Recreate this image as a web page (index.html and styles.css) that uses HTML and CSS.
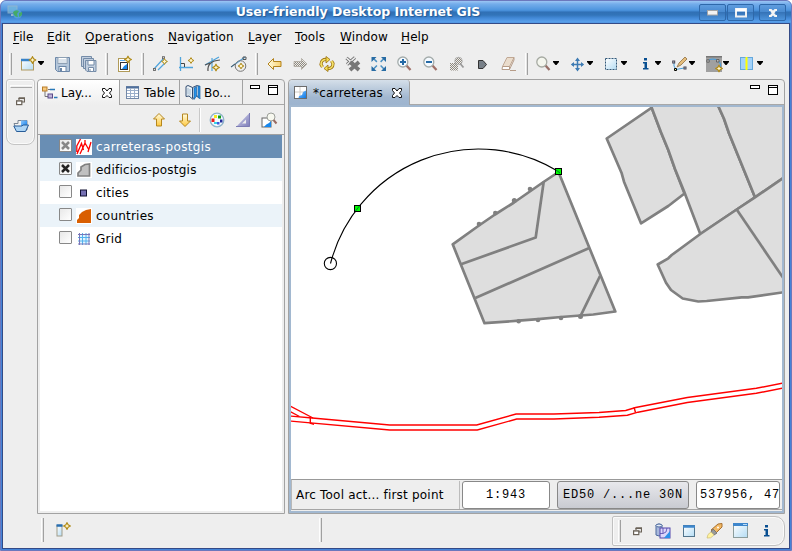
FILE: index.html
```html
<!DOCTYPE html>
<html lang="en">
<head>
<meta charset="utf-8">
<title>User-friendly Desktop Internet GIS</title>
<link rel="stylesheet" href="styles.css">
</head>
<body>
<svg class="defs" width="0" height="0" aria-hidden="true">
  <defs>
    <linearGradient id="gold" x1="0" y1="0" x2="0" y2="1"><stop offset="0" stop-color="#fffbe0"/><stop offset="1" stop-color="#ffc83c"/></linearGradient>
    <linearGradient id="goldh" x1="0" y1="0" x2="1" y2="0"><stop offset="0" stop-color="#fffbe0"/><stop offset="1" stop-color="#f8d070"/></linearGradient>
    <linearGradient id="sky" x1="0" y1="0" x2="1" y2="1"><stop offset="0" stop-color="#ffffff"/><stop offset="1" stop-color="#b4dcf4"/></linearGradient>
    <linearGradient id="blue" x1="0" y1="0" x2="1" y2="1"><stop offset="0" stop-color="#8cc8ff"/><stop offset="1" stop-color="#0a78e6"/></linearGradient>
    <linearGradient id="violet" x1="0" y1="0" x2="1" y2="1"><stop offset="0" stop-color="#d8d8f0"/><stop offset="1" stop-color="#7c7cb8"/></linearGradient>
    <pattern id="dots" width="2" height="2" patternUnits="userSpaceOnUse"><rect width="2" height="2" fill="#eeece8"/><rect width="1" height="1" fill="#8c8880"/><rect x="1" y="1" width="1" height="1" fill="#8c8880"/></pattern>
    <symbol id="spark" viewBox="0 0 7 7"><path d="M3.5 .6 4.5 2.5 6.4 3.5 4.5 4.5 3.5 6.4 2.5 4.5 .6 3.5 2.5 2.5Z" fill="#fff6cc" stroke="#b08a18" stroke-width="1"/></symbol>
    <symbol id="close" viewBox="0 0 12 12"><path d="M1.5 1.5H4L6 4 8 1.5H10.5V3.5L8.5 6 10.5 8.5V10.5H8L6 8.5 4 10.5H1.5V8.5L3.5 6 1.5 3.5Z" fill="#fff" stroke="#111"/></symbol>
    <symbol id="restore" viewBox="0 0 9 9"><path d="M3 1H8.5V5H6M3 1V3" fill="none" stroke="#6a6258" stroke-width="1.2"/><path d="M2.5 1.2H9M0 4.2H6.4" stroke="#6a6258" stroke-width="1.6"/><rect x=".6" y="4" width="5.2" height="3.6" fill="#fff" stroke="#6a6258" stroke-width="1.2"/></symbol>
    <symbol id="min" viewBox="0 0 10 4"><rect x=".5" y=".5" width="9" height="3" fill="#fff" stroke="#000"/></symbol>
    <symbol id="max" viewBox="0 0 10 10"><rect x=".5" y=".5" width="9" height="9" fill="#fff" stroke="#000"/><path d="M0 2.5H10" stroke="#000"/></symbol>
    <symbol id="drop" viewBox="0 0 6 4"><path d="M0 0H6V1L3.5 4H2.5L0 1Z"/></symbol>
    <symbol id="map" viewBox="0 0 14 14"><rect x=".5" y=".5" width="12" height="12" fill="#fff" stroke="#6c6c6c"/><path d="M6 1V12M1 6H12" stroke="#d0ccc6"/><path d="M12 4.500V12H4.500L5 10 8 9 9 6Z" fill="url(#blue)"/></symbol>
  </defs>
</svg>
<div class="window">
  <header class="titlebar">
    <svg class="app-icon" width="16" height="15" viewBox="0 0 16 15"><rect x="1" y="1" width="9" height="7" fill="#75b9dd" stroke="#9dbac9"/><path d="M4 10H8" stroke="#b8c8d0" stroke-width="2"/><circle cx="10.500" cy="9" r="4.500" fill="#5aa8dc"/><path d="M6 7Q9 4 12 6L10 9 11 12Q7 12 6 7M12 8 15 7Q16 11 12 12Z" fill="#4bbd4d"/></svg>
    <h1>User-friendly Desktop Internet GIS</h1>
    <div class="winbtns">
      <span class="winbtn"><svg width="12" height="6" viewBox="0 0 12 6"><rect x=".5" y=".5" width="10" height="4.500" fill="#f2f2f2" stroke="#a5a5a5"/></svg></span>
      <span class="winbtn"><svg width="12" height="10" viewBox="0 0 12 10"><path d="M1 1H11V8.500H1Z" fill="none" stroke="#eef0f2" stroke-width="2"/><path d="M1 2H11" stroke="#fff" stroke-width="3"/></svg></span>
      <span class="winbtn winbtn-close"><svg width="10" height="8" viewBox="0 0 10 8"><path d="M1 1H3L5 3 7 1H9M1 7H3L5 5 7 7H9M3 2 7 6M7 2 3 6" fill="none" stroke="#f4f4f4" stroke-width="2"/></svg></span>
    </div>
  </header>
  <div class="shell">
    <nav class="menubar">
      <span><u>F</u>ile</span><span><u>E</u>dit</span><span><u>O</u>perations</span><span><u>N</u>avigation</span><span><u>L</u>ayer</span><span><u>T</u>ools</span><span><u>W</u>indow</span><span><u>H</u>elp</span>
    </nav>
    <div class="toolbar">
      <i class="grip"></i>
      <span class="tool tool-drop"><svg class="ic" viewBox="0 0 16 16"><rect x=".5" y="3.500" width="12" height="10.500" fill="url(#sky)" stroke="#b09a60"/><path d="M0 4H9" stroke="#3882c8" stroke-width="2.400"/><use href="#spark" x="7.500" y="0" width="8" height="8"/></svg><svg class="arrow"><use href="#drop"/></svg></span>
      <span class="tool"><svg class="ic" viewBox="0 0 16 16"><path d="M.5 1.500H14.500V15.500H2.500L.5 13.500Z" fill="#b4c6da" stroke="#6c87a8"/><rect x="3" y="1.500" width="9" height="6" fill="#fff" stroke="#8ea0b4"/><path d="M4 4H11M4 6H11" stroke="#b8c8d8"/><rect x="4" y="10.500" width="7" height="5" fill="#fff" stroke="#6c87a8"/><rect x="5" y="12" width="2" height="3" fill="#6c87a8"/></svg></span>
      <span class="tool"><svg class="ic" viewBox="0 0 16 16"><g fill="#c2cfdf" stroke="#758ca8"><path d="M.5 .5H10.500V10.500H.5Z"/><path d="M2.500 2.500H12.500V12.500H2.500Z"/><path d="M4.500 4.500H15V15.500H6L4.500 14Z"/><path d="M7 4.500H13V9H7Z" fill="#fff"/><path d="M7.500 11.500H12.500V15.500H7.500Z" fill="#fff"/></g><path d="M9 13V15" stroke="#758ca8"/></svg></span>
      <i class="grip"></i>
      <span class="tool"><svg class="ic" viewBox="0 0 16 16"><rect x="1.500" y="2.500" width="11" height="13" fill="#fff" stroke="#b09a58"/><rect x="3.500" y="6.500" width="7" height="7" fill="#fff" stroke="#333"/><path d="M10 8V13H5Q6 10 10 8" fill="#1686ea"/><path d="M3 4.500H8" stroke="#58a8ec"/><use href="#spark" x="7" y="-.5" width="8" height="8"/></svg></span>
      <i class="grip"></i>
      <span class="tool"><svg class="ic" viewBox="0 0 16 16"><path d="M1 13 11 2M5 14 14 5" fill="none" stroke="#4fa4dc" stroke-width="1.200"/><g fill="#ddd" stroke="#666" stroke-width=".9"><rect x=".5" y="12.500" width="2" height="2"/><rect x="9.500" y=".7" width="2" height="2"/></g><use href="#spark" x="8" y="2" width="7" height="7"/></svg></span>
      <span class="tool"><svg class="ic" viewBox="0 0 16 16"><path d="M1.500 1V15M0 11.500H14" stroke="#4fa4dc" stroke-width="1.300"/><path d="M2 7.500H5.500V11" fill="none" stroke="#444"/><use href="#spark" x="8.500" y="1" width="7" height="7"/></svg></span>
      <span class="tool"><svg class="ic" viewBox="0 0 16 16"><path d="M0 9 14 1M7 2V15" stroke="#4fa4dc" stroke-width="1.200"/><path d="M3 15Q2 5 15 4M0 9 5 7" fill="none" stroke="#555" stroke-width="1.200"/><use href="#spark" x="7" y="7.500" width="8" height="8"/></svg></span>
      <span class="tool"><svg class="ic" viewBox="0 0 16 16"><path d="M0 11 14 1" stroke="#4fa4dc" stroke-width="1.200"/><circle cx="9.500" cy="10" r="5.300" fill="none" stroke="#777"/><path d="M0 11 4 8M12 1H15V3.500H12Z" fill="none" stroke="#555"/><use href="#spark" x="6.500" y="6.500" width="7" height="7"/></svg></span>
      <i class="grip"></i>
      <span class="tool"><svg class="ic" viewBox="0 0 16 16"><path d="M1 8 6.500 2.500V5.500H14V10.500H6.500V13.500Z" fill="url(#goldh)" stroke="#b3821d"/></svg></span>
      <span class="tool"><svg class="ic" viewBox="0 0 16 16"><path d="M14 8 8.500 2.500V5.500H1V10.500H8.500V13.500Z" fill="url(#dots)" stroke="#a8a298" stroke-width=".7"/></svg></span>
      <span class="tool"><svg class="ic" viewBox="0 0 16 16"><g fill="none" stroke="#a07510" stroke-width="3.200"><path d="M8 3.500Q2 3 2 8.500L3.500 11M8 12.500Q14 13 14 7.500L12.500 5"/></g><g fill="none" stroke="#f6e46c" stroke-width="1.600"><path d="M8 3.500Q2 3 2 8.500L3.500 11M8 12.500Q14 13 14 7.500L12.500 5"/></g><path d="M7 .5 11 3.500 7 7ZM9 9 5 12.500 9 15.500Z" fill="#f6dc50" stroke="#987010" stroke-width=".8"/></svg></span>
      <span class="tool"><svg class="ic" viewBox="0 0 16 16"><path d="M1.500 2 9 8.500M10 1.500 2 8.500" stroke="#777" stroke-width="3.200"/><path d="M1.500 2 9 8.500M10 1.500 2 8.500" stroke="#f2f2f2" stroke-width="1.500"/><path d="M5 6 14 14M14 6 5 14" stroke="#777" stroke-width="3.800"/></svg></span>
      <span class="tool"><svg class="ic" viewBox="0 0 16 16"><path d="M2.500 2.500 13 13M13 2.500 2.500 13" stroke="#4c91c3" stroke-width="1.500" stroke-dasharray="4.800 5.200"/><path d="M.5 1H5.500L.5 6ZM15 1H10L15 6ZM.5 15H5.500L.5 10ZM15 15H10L15 10Z" fill="#286ca4"/></svg></span>
      <span class="tool"><svg class="ic" viewBox="0 0 16 16"><path d="M9 9 13.500 14" stroke="#a07068" stroke-width="2.300"/><circle cx="5.800" cy="6" r="5" fill="#f5faff" stroke="#a4acab" stroke-width="1.300"/><path d="M3 6H9M6 3V9" stroke="#2469a5" stroke-width="2"/></svg></span>
      <span class="tool"><svg class="ic" viewBox="0 0 16 16"><path d="M9 9 13.500 14" stroke="#a07068" stroke-width="2.300"/><circle cx="5.800" cy="6" r="5" fill="#f5faff" stroke="#a4acab" stroke-width="1.300"/><path d="M3 6H9" stroke="#2469a5" stroke-width="2"/></svg></span>
      <span class="tool"><svg class="ic" viewBox="0 0 16 16"><rect x="1" y="7" width="8" height="7.500" fill="url(#dots)"/><circle cx="9.500" cy="5" r="3.800" fill="url(#dots)" stroke="#aaa" stroke-width=".7"/><path d="M11.500 8 14.500 11.500" stroke="#999" stroke-width="1.800"/></svg></span>
      <span class="tool"><svg class="ic" viewBox="0 0 16 16"><path d="M3.500 4.500H8L11.500 8.500 8 12.500H3.500Z" fill="#788088" stroke="#333"/></svg></span>
      <span class="tool"><svg class="ic" viewBox="0 0 16 16"><path d="M6 1.500H13L8.500 10.500H1.500Z" fill="#eadccc" stroke="#c0a894"/><path d="M1.500 10.500H8.500V13.500H1Z" fill="#fff" stroke="#b69c88"/><path d="M8.500 13.500 13 4V1.500M9 14.500H15" fill="none" stroke="#b69c88"/></svg></span>
      <i class="grip grip-last"></i>
      <span class="tool tool-drop"><svg class="ic" viewBox="0 0 16 16"><path d="M9.500 9.500 13.500 14" stroke="#987068" stroke-width="2.300"/><circle cx="5.800" cy="6" r="5" fill="#f4f6ee" stroke="#a6aaa2" stroke-width="1.300"/></svg><svg class="arrow"><use href="#drop"/></svg></span>
      <span class="tool tool-drop"><svg class="ic" viewBox="0 0 16 16"><path d="M7.500 3V14M2 8.500H13" stroke="#3f7cb4" stroke-width="1.500"/><path d="M7.500 1.500 10 5H5ZM7.500 15.500 10 12H5ZM.8 8.500 4 6V11ZM14.200 8.500 11 6V11Z" fill="#3f7cb4"/></svg><svg class="arrow"><use href="#drop"/></svg></span>
      <span class="tool tool-drop"><svg class="ic" viewBox="0 0 16 16"><rect x="1.500" y="2.500" width="11" height="11" fill="url(#sky)" stroke="#335878" stroke-dasharray="2 1"/></svg><svg class="arrow"><use href="#drop"/></svg></span>
      <span class="tool tool-drop"><svg class="ic" viewBox="0 0 16 16"><path d="M6 2H9V4.500H6ZM5 6H9V12H10.500V13.500H5V12H6.500V7.500H5Z" fill="#084f91"/></svg><svg class="arrow"><use href="#drop"/></svg></span>
      <span class="tool tool-drop"><svg class="ic" viewBox="0 0 16 16"><path d="M2 7V10L4 13.500 12 12" fill="none" stroke="#48a0dc"/><path d="M5 11 7 7 13 1 15 3 9 9Z" fill="#e5bd7c" stroke="#8f6e40" stroke-width=".8"/><g fill="#ddd" stroke="#445"><rect x=".7" y="5" width="2" height="2"/><rect x="12" y="11" width="2" height="2"/></g><path d="M2.500 12.500H4.500V14.500H2.500Z" fill="#ff9" stroke="#000"/></svg><svg class="arrow"><use href="#drop"/></svg></span>
      <span class="tool tool-drop"><svg class="ic" viewBox="0 0 16 16"><path d="M0 0H16V16H0Z" fill="#a0a0a0"/><path d="M0 .8H16" stroke="#777" stroke-width="1.500"/><path d="M2 5Q3 3 7 3T12 5Q15 6 14.500 12" fill="none" stroke="#3d9ee5"/><path d="M.8 3.800H3.200V6.200H.8ZM10.500 3.500H13V6H10.500Z" fill="#bbb" stroke="#555" stroke-width=".8"/><use href="#spark" x="9" y="8.500" width="8" height="8"/></svg><svg class="arrow"><use href="#drop"/></svg></span>
      <span class="tool tool-drop"><svg class="ic" viewBox="0 0 16 16"><rect x=".5" y="1.500" width="12" height="12" fill="#a2d2fa" stroke="#65a8dc"/><path d="M6.500 1V14" stroke="#ff0" stroke-width="2"/></svg><svg class="arrow"><use href="#drop"/></svg></span>
    </div>
    <main class="workbench">
      <aside class="fastbar">
        <i class="handle"></i>
        <svg width="9" height="9"><use href="#restore"/></svg>
        <svg width="16" height="14" viewBox="0 0 16 14"><path d="M1 4.500H5V1.500H14V11H3.500Z" fill="#f2f2f0" stroke="#7a8594"/><path d="M8 1.500H14V9L8 8Z" fill="url(#blue)"/><path d="M.8 7H9L10 6H15.500L12.500 12.500H3.500Z" fill="#aed5f5" stroke="#285c98"/></svg>
      </aside>
      <section class="view">
        <div class="tabs">
          <div class="tab tab-active"><svg width="16" height="14" viewBox="0 0 16 14"><path d="M3 5V10.500H7M6 3.500H10" fill="none" stroke="#777"/><rect x=".5" y="1" width="4.500" height="4" fill="#f5c87c" stroke="#b97d28"/><rect x="6" y="8" width="4.500" height="4" fill="#c0b4da" stroke="#594a88"/><path d="M8 3.500H13M12 11.500H15.500" stroke="#2878b8" stroke-width="1.300"/></svg><b>Lay...</b><svg class="x" width="12" height="12"><use href="#close"/></svg></div>
          <div class="tab tab-table"><svg width="13" height="13" viewBox="0 0 13 13"><rect x=".5" y=".5" width="12" height="12" fill="#fff" stroke="#7388a8"/><path d="M0 1.500H13" stroke="#50709c" stroke-width="2"/><path d="M1 4.500H12M1 7.500H12M1 10.500H12M4.500 2V12M8.500 2V12" stroke="#9cafca"/></svg><b>Table</b></div>
          <div class="tab tab-book"><svg width="16" height="15" viewBox="0 0 16 15"><path d="M1 1.500 3 .5 7.500 2.500 12 .5 14.500 1.500V11.500L11 11 7.500 14 4 11 1 11.500Z" fill="#edf3f8" stroke="#334d70"/><path d="M7.500 2.500V13.500" stroke="#334d70"/><path d="M3 3V9.500M5 4V10.500" stroke="#9db6cc"/><path d="M9 3 11.500 1.500V11.500L10.500 12.500 9 14.500ZM13 1H15V14L14 12.500 13 13Z" fill="#2593ec" stroke="#1b5f9f" stroke-width=".7"/></svg><b>Bo...</b></div>
          <div class="viewctl"><svg width="10" height="4"><use href="#min"/></svg><svg width="10" height="10"><use href="#max"/></svg></div>
        </div>
        <div class="viewbar">
          <svg class="ic" viewBox="0 0 16 16"><path d="M8 1.500 13.500 7H10.500V14H5.500V7H2.500Z" fill="url(#gold)" stroke="#b5861e"/></svg>
          <svg class="ic" viewBox="0 0 16 16"><path d="M8 14.500 13.500 9H10.500V2H5.500V9H2.500Z" fill="url(#gold)" stroke="#b5861e"/></svg>
          <i class="rule"></i>
          <svg class="ic" viewBox="0 0 16 16"><circle cx="8" cy="8" r="6.800" fill="#f4faff" stroke="#8fb4c8" stroke-width="1.300"/><path d="M5 3H8V6H5Z" fill="#f2ea22"/><path d="M9 3.500H12V6.500H9Z" fill="#139b1a"/><path d="M2.500 6.500H5.500V10H2.500Z" fill="#ed1c1c"/><path d="M11 7.500H13.500V10.500H11Z" fill="#222c9c"/><path d="M5 10H8V12H5Z" fill="#38d4e8"/><path d="M8 10H10.500V12.500H8Z" fill="#3a5adf"/></svg>
          <svg class="ic" viewBox="0 0 16 16"><path d="M14.500 1V15H1Z" fill="url(#violet)"/><path d="M14.500 1V14.500H1" fill="none" stroke="#7c7cb4"/><path d="M11 7.500V11.500H7Z" fill="#eee"/></svg>
          <svg class="ic" viewBox="0 0 16 16"><rect x="1" y="6" width="9" height="9" fill="#fff" stroke="#666"/><path d="M10 9V15H3Q5 12 8 11Z" fill="#1787ed"/><circle cx="10" cy="5" r="4" fill="#f7f8ef" stroke="#9ca09a"/><path d="M12.500 8 15.500 11.500" stroke="#996b62" stroke-width="2"/></svg>
        </div>
        <ul class="layers">
          <li class="selected"><span class="check"><svg width="9" height="9" viewBox="0 0 9 9"><path d="M1 1 8 8M8 1 1 8" stroke="#888" stroke-width="2.500"/></svg></span><svg class="ic" viewBox="0 0 16 16"><path d="M0 0H16V16H0Z" fill="#fff"/><path d="M4.500 0 .8 7V13M1 15 5.500 4.500 7.500 11M4 15 9 4V1M9 4 13 11M12 13 15 3" fill="none" stroke="#f00" stroke-width="1.300"/></svg><span>carreteras-postgis</span></li>
          <li><span class="check"><svg width="9" height="9" viewBox="0 0 9 9"><path d="M1 1 8 8M8 1 1 8" stroke="#222" stroke-width="2.500"/></svg></span><svg class="ic" viewBox="0 0 16 16"><path d="M0 0H16V16H0Z" fill="#fff"/><path d="M2 14V11L5 8V5L9 2.500 13.500 2V14Z" fill="#c0c0c0" stroke="#808080" stroke-width="1.700"/></svg><span>edificios-postgis</span></li>
          <li><span class="check"></span><svg class="ic" viewBox="0 0 16 16"><rect x="4.500" y="5" width="6" height="6" fill="#7570b3" stroke="#101030"/></svg><span>cities</span></li>
          <li><span class="check"></span><svg class="ic" viewBox="0 0 16 16"><path d="M0 0H16V16H0Z" fill="#fff"/><path d="M1 15V12L3 10V7L6 4 10 2 15 1V15Z" fill="#d95f02"/></svg><span>countries</span></li>
          <li><span class="check"></span><svg class="ic" viewBox="0 0 16 16"><path d="M3 3H13V13H3Z" fill="#e2f5ff"/><path d="M6.500 2V14M10 2V14M2 6.500H14M2 10H14" stroke="#52b2ee"/><path d="M3.500 2V14M13 2V14M2 3.500H14M2 13H14" stroke="#7876b8"/></svg><span>Grid</span></li>
        </ul>
      </section>
      <section class="editor">
        <div class="tabs">
          <div class="tab tab-editor"><svg width="14" height="14"><use href="#map"/></svg><b>*carreteras</b><svg class="x" width="12" height="12"><use href="#close"/></svg></div>
          <div class="viewctl"><svg width="10" height="4"><use href="#min"/></svg><svg width="10" height="10"><use href="#max"/></svg></div>
        </div>
        <div class="editor-body">
          <svg class="canvas" viewBox="291 107 491 372">
            <g fill="#dedede" stroke="#808080" stroke-width="2.700" stroke-linejoin="round">
              <path d="M558.500 172 615.300 311.500 593.300 314.500 580.500 315.500 561 317 538 319.200 518.700 320.700 484.500 323.200 452.700 244.300 479 225.500 495 214.500 514 202.500 543.500 182Z"/>
              <path d="M461 264.300 535.700 237.500 543.700 181.700M475.300 298 589.300 248M600 276 580.700 315.700" fill="none"/>
              <path d="M606.700 138.500 651.700 107.700 661 132.300 668.300 150 675 169 684.500 193.500 668.300 206 641 223.300 624 181.700 621.700 173.300Z"/>
              <path d="M651.700 107.700 645 95H715L718.700 107 724 118.700 729 133.300 755 197.300 700.300 234 684.300 192 675 169 668.300 150 661 132.300Z"/>
              <path d="M715 95 718.700 107 724 118.700 729 133.300 755 197.300 790 173.500V95Z"/>
              <path d="M657.700 264.500 668.300 258.300 671.700 255 700.300 234 736.700 209.500 755 197.300 790 173.500V291.500L782 292.500 748 297.300 741.700 297.300 706.700 301 698.300 301.500 682.700 298.500 671 290 666 282.700Z"/>
              <path d="M736.700 209.500 790 288" fill="none"/>
            </g>
            <g fill="#808080"><circle cx="479" cy="224" r="2.300"/><circle cx="495.300" cy="213" r="2.300"/><circle cx="514.300" cy="200.500" r="2.500"/><circle cx="530" cy="189" r="2.300"/><circle cx="518.700" cy="321.300" r="2.300"/><circle cx="538" cy="320" r="2.300"/><circle cx="561" cy="318" r="2.300"/><circle cx="580.500" cy="316.500" r="2.500"/></g>
            <g fill="none" stroke="#f00" stroke-width="1.400">
              <path d="M290 416 312.300 418 389.700 425H476.700L516 414H554L599 412.500 625.700 410.500 635.700 407.500 687.300 397.500 756.300 388.300 783 383"/>
              <path d="M290 421 389.700 430H477.300L516.700 419H554L599 417.200 627.300 415.200 638 412.200 687.300 402.500 756.300 393.300 783 388"/>
              <path d="M290 406 313 418M290 411.500 299.500 416.500M310.300 416.500V423.300L314 424.300M634 407.300 635.500 412.500"/>
            </g>
            <path d="M330.500 263.500A153.050 153.050 0 0 1 558.500 171.500" fill="none" stroke="#000" stroke-width="1.100"/>
            <circle cx="330.400" cy="263.500" r="6.100" fill="none" stroke="#000" stroke-width="1.100"/>
            <g fill="#0f0" stroke="#000"><rect x="354.500" y="205.500" width="6" height="6"/><rect x="555.500" y="168.500" width="6" height="6"/></g>
            <path d="M355.500 211 359.500 206M556 170 560 173" stroke="#063" stroke-width=".9"/>
          </svg>
          <div class="mapstatus">
            <span class="message">Arc Tool act... first point</span>
            <span class="field scale">1:943</span>
            <span class="field crs">ED50 /...ne 30N</span>
            <span class="field coords">537956, 47</span>
          </div>
        </div>
      </section>
    </main>
    <footer class="statusbar">
      <i class="grip"></i>
      <svg class="newview" width="16" height="16" viewBox="0 0 16 16"><rect x="1" y="3.500" width="5" height="10.500" fill="url(#sky)" stroke="#a09b88"/><path d="M.5 3.500H6.500" stroke="#286eb0" stroke-width="2.500"/><use href="#spark" x="7" y="0" width="8" height="8"/></svg>
      <i class="grip grip-mid"></i>
      <div class="tray">
        <i class="grip"></i>
        <svg width="9" height="9"><use href="#restore"/></svg>
        <svg class="ic" viewBox="0 0 16 16"><path d="M1 2V12Q4 14 7 12V2Q4 0 1 2Z" fill="#a8b8dc" stroke="#4d6a9d"/><ellipse cx="4" cy="2.500" rx="3" ry="1.500" fill="#e7edf8" stroke="#4d6a9d"/><rect x="5" y="5" width="10" height="10" fill="#ddd6fb" stroke="#5247ac"/><path d="M8 5V10.500H5M12 5 11 9 8 10.500" fill="none" stroke="#5247ac" stroke-width=".8"/><path d="M15 8V15H9Z" fill="#2c90e9"/></svg>
        <svg class="ic ic-win" viewBox="0 0 16 16"><rect x="2.500" y="2.500" width="11" height="11" fill="url(#sky)" stroke="#51748c"/><path d="M2 3.500H14" stroke="#3d86cc" stroke-width="2.500"/></svg>
        <svg class="ic" viewBox="0 0 16 16"><path d="M4 7 11 1 15 .5V4L8 11Z" fill="#f2b965" stroke="#a87030"/><path d="M6 6 10 10 7 12 4 9Z" fill="#999" stroke="#777"/><path d="M4 9 7 12Q4 16 0 15 0 11 4 9Z" fill="#fff3a0" stroke="#caba78" stroke-width=".7"/><circle cx="11" cy="4.500" r="1" fill="#fff"/></svg>
        <svg class="ic" viewBox="0 0 16 16"><rect x=".5" y=".5" width="14" height="14" fill="url(#sky)" stroke="#8b9c9c"/><path d="M0 1.500H15" stroke="#3d86cc" stroke-width="3"/><path d="M10 1.500H14" stroke="#b8dcf8"/></svg>
        <svg class="ic" viewBox="0 0 16 16"><path d="M6 2H9V4.500H6ZM5 6H9V12H10.500V13.500H5V12H6.500V7.500H5Z" fill="#084f91"/></svg>
      </div>
    </footer>
  </div>
</div>
</body>
</html>
```
FILE: styles.css
```css
* { box-sizing: border-box; }
body { margin: 0; background: #fff; font: 12px "DejaVu Sans", sans-serif; color: #000; overflow: hidden; }
svg { display: block; flex: none; overflow: visible; }
i { display: block; flex: none; }
b { font-weight: normal; }
.defs { position: absolute; }

.window { width: 792px; height: 551px; display: flex; flex-direction: column; border: 1px solid #6b78bd; border-radius: 6px 6px 0 0; background: #4584d8; overflow: hidden; }
.titlebar { height: 22px; flex: none; display: grid; grid-template-columns: 92px 1fr 92px; background: linear-gradient(#9cc6f4 0, #74adeb 3px, #4e95de 9px, #4289d4 10px, #3070b5 11px, #3274b9 14px, #4389d7 17px, #5aa1ec 21px, #4b90dc 22px); }
.app-icon { margin: 4px 0 0 6px; opacity: .75; }
.titlebar h1 { margin: 0; padding-top: 2px; text-align: center; font: bold 12.5px/18px "DejaVu Sans", sans-serif; color: #fff; text-shadow: 1px 1px 1px #245a96; white-space: nowrap; transform: translateX(-38px); }
.winbtns { display: flex; padding-top: 3px; gap: 1px; }
.winbtn { width: 27px; height: 17px; flex: none; display: grid; place-items: center; border: 1px solid #2e68aa; border-radius: 2px; background: linear-gradient(#5f9ddf, #498ad0 45%, #3674b8 50%, #4d94dc); }
.winbtn-close { margin-left: 4px; }

.shell { flex: 1; min-height: 0; display: flex; flex-direction: column; margin: 0 1px 1px; border: 1px solid #344a86; background: #eee; }
.menubar { height: 27px; flex: none; display: flex; padding-left: 10px; line-height: 26px; letter-spacing: .1px; }
.menubar span { white-space: nowrap; }
.menubar u { text-decoration-thickness: 1px; text-underline-offset: 2px; }
.menubar span:nth-child(1) { width: 34px; }
.menubar span:nth-child(2) { width: 38px; }
.menubar span:nth-child(3) { width: 83px; letter-spacing: .3px; }
.menubar span:nth-child(4) { width: 80px; }
.menubar span:nth-child(5) { width: 47px; letter-spacing: 0; }
.menubar span:nth-child(6) { width: 45px; }
.menubar span:nth-child(7) { width: 61px; }

.toolbar { height: 28px; flex: none; display: flex; align-items: center; padding: 0 0 2px 3px; }
.grip { width: 3px; height: 22px; border-left: 1px solid #fdfdfd; border-right: 1px solid #a0a0a0; background: #e4e4e4; }
.toolbar .grip { margin: 0 4px 0 3px; }
.toolbar .grip-last { margin-right: 3px; }
.tool { width: 26px; padding-left: 5px; flex: none; display: flex; }
.tool-drop { width: 34px; gap: 1px; }
.ic { width: 16px; height: 16px; }
.arrow { width: 6px; height: 4px; margin-top: 5px; }

.workbench { height: 435px; flex: none; display: flex; align-items: flex-start; padding: 0 4px 0 3px; }
.fastbar { width: 29px; height: 66px; flex: none; display: flex; flex-direction: column; align-items: center; border: 1px solid #c4c4c4; border-radius: 3px 3px 8px 8px; box-shadow: inset 0 0 0 1px #fafafa; }
.handle { width: 22px; height: 3px; margin: 5px 0 9px; border: solid #fcfcfc; border-width: 1px 0 0 1px; border-bottom: 1px solid #aaa; }
.fastbar svg + svg { margin-top: 13px; }

.view, .editor { height: 435px; display: flex; flex-direction: column; border: 1px solid #a2a2a2; border-radius: 4px 4px 0 0; }
.view { width: 248px; margin-left: 2px; flex: none; }
.tabs { height: 25px; flex: none; display: flex; border-bottom: 1px solid #a8a8a8; }
.tab { display: flex; align-items: center; border-right: 1px solid #a2a2a2; white-space: nowrap; }
.tab b { padding-top: 1px; }
.tab-active { width: 82px; height: 25px; padding-left: 4px; gap: 3px; background: linear-gradient(#fff, #eee); border-radius: 4px 0 0 0; }
.tab .x { margin-left: auto; margin-right: 6px; }
.tab-table { width: 60px; padding-left: 6px; gap: 5px; }
.tab-book { width: 63px; padding-left: 5px; gap: 3px; }
.viewctl { display: flex; gap: 8px; margin-left: auto; padding: 5px 6px 0 0; }
.viewbar { height: 30px; flex: none; display: flex; align-items: center; justify-content: flex-end; gap: 10px; padding-right: 7px; border-bottom: 1px solid #a0a0a0; }
.viewbar .rule { width: 2px; height: 24px; margin: 0 -2px 0 -4px; border-left: 1px solid #c8c8c8; border-right: 1px solid #fff; }
.layers { flex: 1; margin: 0 2px 2px; padding: 0; list-style: none; background: #fff; letter-spacing: .22px; }
.layers li { height: 23px; display: flex; align-items: center; padding-left: 19px; white-space: nowrap; }
.layers li:nth-child(even) { background: #ebf3f9; }
.layers .selected { background: #698eb4; color: #fff; letter-spacing: .35px; }
.layers .ic { margin: 0 4px; }
.check { width: 13px; height: 13px; margin-bottom: 2px; flex: none; display: grid; place-items: center; border: 1px solid #888; border-radius: 1px; background: linear-gradient(135deg, #e8e8e8, #fff); }

.editor { width: 497px; margin-left: 3px; flex: none; }
.tab-editor { width: 121px; height: 25px; padding-left: 5px; gap: 5px; border-radius: 4px 3px 0 0; background: linear-gradient(#d5dfe9, #a1b7d0 70%, #9db4cf); letter-spacing: .25px; }
.editor-body { flex: 1; min-height: 0; display: flex; flex-direction: column; border: 2px solid #a2b8d0; }
.canvas { width: 491px; height: 372px; background: #fff; overflow: hidden; }
.mapstatus { height: 31px; flex: none; display: flex; align-items: center; border-top: 1px solid #999; border-left: 1px solid #b8b8b8; border-bottom: 1px solid #a5a5a5; padding-left: 4px; overflow: hidden; background: #eee; }
.message { width: 164px; height: 28px; line-height: 29px; flex: none; white-space: nowrap; border-right: 1px solid #bcbcbc; letter-spacing: .2px; }
.field { height: 28px; flex: none; line-height: 27px; border: 1px solid #888; border-radius: 3px; background: #fff; font-family: "Liberation Mono", monospace; font-size: 12px; letter-spacing: .8px; white-space: pre; overflow: hidden; }
.scale { width: 88px; margin-left: 2px; text-align: center; }
.crs { width: 132px; margin-left: 7px; text-align: center; background: linear-gradient(#e8e8ec, #c9cbd2); }
.coords { width: 84px; margin-left: 7px; padding-left: 3px; }

.statusbar { flex: 1; display: flex; align-items: flex-start; padding: 4px 4px 0 38px; }
.statusbar > .grip { height: 24px; }
.newview { margin: 4px 0 0 12px; }
.statusbar > .grip-mid { margin-left: 247px; }
.tray { width: 173px; height: 30px; margin: -2px 0 0 auto; display: flex; align-items: center; padding-left: 5px; border: 1px solid #c0c0c0; border-radius: 2px 10px 10px 2px; box-shadow: inset 0 0 0 1px #fafafa; }
.tray .grip { margin-right: 12px; }
.tray .ic { margin-left: 10px; }
.tray .grip + svg + .ic { margin-left: 13px; }
```
